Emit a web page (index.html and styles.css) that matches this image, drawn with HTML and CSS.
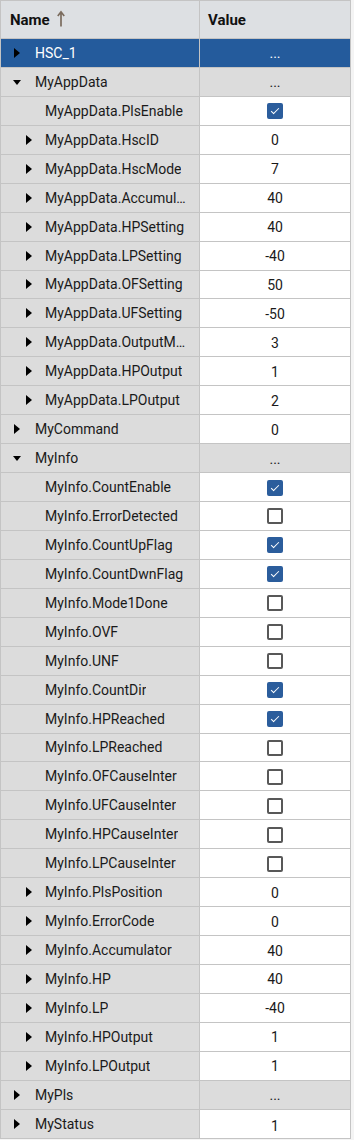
FILE: index.html
```html
<!DOCTYPE html>
<html>
<head>
<meta charset="utf-8">
<link rel="stylesheet" href="styles.css">
</head>
<body>
<div class="grid">
  <div class="head">
    <div class="hname"><span>Name</span>
      <svg class="sort" width="8" height="17" viewBox="0 0 8 17"><path d="M4 16.5V2.5M0.8 6L4 1.8L7.2 6" fill="none" stroke="#7b6c5e" stroke-width="1.7"/></svg>
    </div>
    <div class="hval">Value</div>
  </div>

  <div class="row sel"><div class="name l0"><span class="tw r"></span><span class="lbl">HSC_1</span></div><div class="val g">...</div></div>
  <div class="row"><div class="name l0"><span class="tw d"></span><span class="lbl">MyAppData</span></div><div class="val g">...</div></div>
  <div class="row"><div class="name l1"><span class="tw"></span><span class="lbl">MyAppData.PlsEnable</span></div><div class="val"><span class="cb on"></span></div></div>
  <div class="row"><div class="name l1"><span class="tw r"></span><span class="lbl">MyAppData.HscID</span></div><div class="val">0</div></div>
  <div class="row"><div class="name l1"><span class="tw r"></span><span class="lbl">MyAppData.HscMode</span></div><div class="val">7</div></div>
  <div class="row"><div class="name l1"><span class="tw r"></span><span class="lbl">MyAppData.Accumul…</span></div><div class="val">40</div></div>
  <div class="row"><div class="name l1"><span class="tw r"></span><span class="lbl">MyAppData.HPSetting</span></div><div class="val">40</div></div>
  <div class="row"><div class="name l1"><span class="tw r"></span><span class="lbl">MyAppData.LPSetting</span></div><div class="val">-40</div></div>
  <div class="row"><div class="name l1"><span class="tw r"></span><span class="lbl">MyAppData.OFSetting</span></div><div class="val">50</div></div>
  <div class="row"><div class="name l1"><span class="tw r"></span><span class="lbl">MyAppData.UFSetting</span></div><div class="val">-50</div></div>
  <div class="row"><div class="name l1"><span class="tw r"></span><span class="lbl">MyAppData.OutputM…</span></div><div class="val">3</div></div>
  <div class="row"><div class="name l1"><span class="tw r"></span><span class="lbl">MyAppData.HPOutput</span></div><div class="val">1</div></div>
  <div class="row"><div class="name l1"><span class="tw r"></span><span class="lbl">MyAppData.LPOutput</span></div><div class="val">2</div></div>
  <div class="row"><div class="name l0"><span class="tw r"></span><span class="lbl">MyCommand</span></div><div class="val">0</div></div>
  <div class="row"><div class="name l0"><span class="tw d"></span><span class="lbl">MyInfo</span></div><div class="val g">...</div></div>
  <div class="row"><div class="name l1"><span class="tw"></span><span class="lbl">MyInfo.CountEnable</span></div><div class="val"><span class="cb on"></span></div></div>
  <div class="row"><div class="name l1"><span class="tw"></span><span class="lbl">MyInfo.ErrorDetected</span></div><div class="val"><span class="cb"></span></div></div>
  <div class="row"><div class="name l1"><span class="tw"></span><span class="lbl">MyInfo.CountUpFlag</span></div><div class="val"><span class="cb on"></span></div></div>
  <div class="row"><div class="name l1"><span class="tw"></span><span class="lbl">MyInfo.CountDwnFlag</span></div><div class="val"><span class="cb on"></span></div></div>
  <div class="row"><div class="name l1"><span class="tw"></span><span class="lbl">MyInfo.Mode1Done</span></div><div class="val"><span class="cb"></span></div></div>
  <div class="row"><div class="name l1"><span class="tw"></span><span class="lbl">MyInfo.OVF</span></div><div class="val"><span class="cb"></span></div></div>
  <div class="row"><div class="name l1"><span class="tw"></span><span class="lbl">MyInfo.UNF</span></div><div class="val"><span class="cb"></span></div></div>
  <div class="row"><div class="name l1"><span class="tw"></span><span class="lbl">MyInfo.CountDir</span></div><div class="val"><span class="cb on"></span></div></div>
  <div class="row"><div class="name l1"><span class="tw"></span><span class="lbl">MyInfo.HPReached</span></div><div class="val"><span class="cb on"></span></div></div>
  <div class="row"><div class="name l1"><span class="tw"></span><span class="lbl">MyInfo.LPReached</span></div><div class="val"><span class="cb"></span></div></div>
  <div class="row"><div class="name l1"><span class="tw"></span><span class="lbl">MyInfo.OFCauseInter</span></div><div class="val"><span class="cb"></span></div></div>
  <div class="row"><div class="name l1"><span class="tw"></span><span class="lbl">MyInfo.UFCauseInter</span></div><div class="val"><span class="cb"></span></div></div>
  <div class="row"><div class="name l1"><span class="tw"></span><span class="lbl">MyInfo.HPCauseInter</span></div><div class="val"><span class="cb"></span></div></div>
  <div class="row"><div class="name l1"><span class="tw"></span><span class="lbl">MyInfo.LPCauseInter</span></div><div class="val"><span class="cb"></span></div></div>
  <div class="row"><div class="name l1"><span class="tw r"></span><span class="lbl">MyInfo.PlsPosition</span></div><div class="val">0</div></div>
  <div class="row"><div class="name l1"><span class="tw r"></span><span class="lbl">MyInfo.ErrorCode</span></div><div class="val">0</div></div>
  <div class="row"><div class="name l1"><span class="tw r"></span><span class="lbl">MyInfo.Accumulator</span></div><div class="val">40</div></div>
  <div class="row"><div class="name l1"><span class="tw r"></span><span class="lbl">MyInfo.HP</span></div><div class="val">40</div></div>
  <div class="row"><div class="name l1"><span class="tw r"></span><span class="lbl">MyInfo.LP</span></div><div class="val">-40</div></div>
  <div class="row"><div class="name l1"><span class="tw r"></span><span class="lbl">MyInfo.HPOutput</span></div><div class="val">1</div></div>
  <div class="row"><div class="name l1"><span class="tw r"></span><span class="lbl">MyInfo.LPOutput</span></div><div class="val">1</div></div>
  <div class="row"><div class="name l0"><span class="tw r"></span><span class="lbl">MyPls</span></div><div class="val g">...</div></div>
  <div class="row"><div class="name l0"><span class="tw r"></span><span class="lbl">MyStatus</span></div><div class="val low">1</div></div>
</div>
</body>
</html>
```

FILE: styles.css
```css
html, body {
  margin: 0;
  padding: 0;
  background: #f4f4f4;
}
body {
  font-family: Roboto, "Liberation Sans", sans-serif;
  font-size: 14px;
  color: #1a1a1a;
}
.grid {
  width: 351px;
  box-sizing: border-box;
  border: 1px solid #c4c4c4;
  border-bottom: none;
  background: #dcdcdc;
}
.head {
  display: flex;
  height: 38px;
  box-sizing: border-box;
  border-bottom: 1px solid #c4c4c4;
  background: #dde0e3;
  font-weight: bold;
  font-size: 15px;
  color: #111;
}
.hname {
  width: 199px;
  border-right: 1px solid #c4c4c4;
  display: flex;
  align-items: center;
  padding-left: 9px;
  box-sizing: border-box;
}
.sort {
  margin-left: 7px;
  margin-top: -2px;
}
.hval {
  flex: 1;
  display: flex;
  align-items: center;
  padding-left: 8px;
}
.row {
  display: flex;
  height: 28.95px;
  box-sizing: border-box;
  border-bottom: 1px solid #c4c4c4;
}
.name {
  width: 199px;
  border-right: 1px solid #c4c4c4;
  display: flex;
  align-items: center;
  background: #dcdcdc;
  box-sizing: border-box;
  white-space: nowrap;
  overflow: hidden;
}
.name.l0 { padding-left: 11px; }
.name.l1 { padding-left: 23px; }
.tw {
  width: 9px;
  height: 10px;
  flex: none;
  display: flex;
  align-items: center;
  justify-content: center;
}
.name.l0 .tw { margin-right: 14px; }
.name.l1 .tw { margin-right: 12px; }
.tw.r::before {
  content: "";
  border-left: 6px solid #000;
  border-top: 5px solid transparent;
  border-bottom: 5px solid transparent;
}
.tw.d::before {
  content: "";
  border-top: 5px solid #000;
  border-left: 4.5px solid transparent;
  border-right: 4.5px solid transparent;
  margin-top: 1px;
}
.lbl {
  overflow: hidden;
  text-overflow: ellipsis;
}
.val {
  flex: 1;
  display: flex;
  align-items: center;
  justify-content: center;
  background: #fff;
  padding-top: 1px;
}
.val.g { background: #dcdcdc; }
.val.low { padding-top: 4px; }
.row.sel .name, .row.sel .val {
  background: #245b9c;
  color: #fff;
}
.cb {
  width: 16px;
  height: 16px;
  box-sizing: border-box;
  border: 2px solid #585858;
  border-radius: 2px;
  background: #fff;
  position: relative;
}
.cb.on {
  border-color: #2b5d9c;
  background: #2b5d9c;
}
.cb.on::after {
  content: "";
  position: absolute;
  left: 4px;
  top: 1px;
  width: 3px;
  height: 7px;
  border-right: 1.5px solid #fff;
  border-bottom: 1.5px solid #fff;
  transform: rotate(45deg);
}
```
